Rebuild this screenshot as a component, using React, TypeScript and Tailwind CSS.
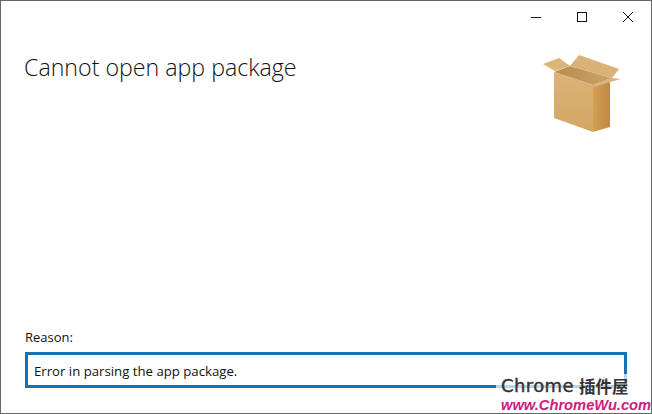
export default function App() {
  return (
    <div className="relative flex h-[414px] w-[652px] flex-col overflow-hidden border border-[#666666] bg-white text-black" style={{ fontFamily: '"Open Sans", "Noto Sans", sans-serif' }}>
      <div className="flex h-[31px] shrink-0 justify-end">
        <div className="flex w-[46px] items-center justify-center">
          <svg width="10" height="10" viewBox="0 0 10 10"><path d="M0 5.5H10" stroke="#111" strokeWidth="1" /></svg>
        </div>
        <div className="flex w-[46px] items-center justify-center">
          <svg width="10" height="10" viewBox="0 0 10 10"><rect x="0.5" y="0.5" width="9" height="9" fill="none" stroke="#111" /></svg>
        </div>
        <div className="flex w-[46px] items-center justify-center">
          <svg width="10" height="10" viewBox="0 0 10 10"><path d="M0 0L10 10M10 0L0 10" stroke="#111" strokeWidth="1" /></svg>
        </div>
      </div>
      <div className="flex items-start justify-between pl-[23px] pr-[29px] pt-[22px]">
        <h1 className="-mt-px text-[23.2px] font-light leading-[28px] text-[#111]">Cannot open app package</h1>
        <svg width="80" height="80" viewBox="0 0 80 80" className="shrink-0">
          <defs>
            <linearGradient id="front" x1="0" y1="0" x2="0" y2="1">
              <stop offset="0" stopColor="#dcb477" />
              <stop offset="1" stopColor="#d3a662" />
            </linearGradient>
            <linearGradient id="side" x1="0" y1="0" x2="1" y2="0">
              <stop offset="0" stopColor="#d39f55" />
              <stop offset="1" stopColor="#bf8a42" />
            </linearGradient>
            <linearGradient id="inner" x1="0" y1="0" x2="1" y2="0">
              <stop offset="0" stopColor="#b98c50" />
              <stop offset="1" stopColor="#cda266" />
            </linearGradient>
          </defs>
          <polygon points="28,12 70,24 51,31 12,18" fill="url(#inner)" />
          <polygon points="37,1 77,15 70,24 28,12" fill="#dab277" />
          <polygon points="1,10 17,4 28,12 13,17" fill="#dcb478" />
          <polygon points="12,18 51,31 51,78 12,64" fill="url(#front)" />
          <polygon points="51,31 68,26 68,73 51,78" fill="url(#side)" />
          <polygon points="51,31 69,24 79,25 68,28 52,33" fill="#d8b47e" />
        </svg>
      </div>
      <div className="mt-auto flex flex-col px-[24px] pb-[25px]">
        <p className="mb-[6px] text-[13px] leading-[18px] text-[#111]">Reason:</p>
        <div className="flex h-[36px] w-[602px] items-center border-[3px] border-[#1572b5] px-[6px] pt-[3px] text-[13.2px] text-[#111]">
          Error in parsing the app package.
        </div>
      </div>
      <div className="absolute left-[495px] top-[373px] flex flex-col bg-white/70 pl-[5px]">
        <span className="flex items-center gap-[5px] whitespace-nowrap leading-[24px] text-[#333]">
          <span className="text-[18px] tracking-[0.4px] [-webkit-text-stroke:0.4px_#333]" style={{ fontFamily: '"DejaVu Sans", sans-serif' }}>Chrome</span>
          <span className="text-[16.5px] font-bold" style={{ fontFamily: '"Noto Sans CJK SC", sans-serif' }}>插件屋</span>
        </span>
        <span className="whitespace-nowrap text-[14.7px] font-bold italic leading-[15px] text-[#cf1a7c]" style={{ fontFamily: '"Liberation Sans", sans-serif' }}>www.ChromeWu.com</span>
      </div>
    </div>
  );
}
